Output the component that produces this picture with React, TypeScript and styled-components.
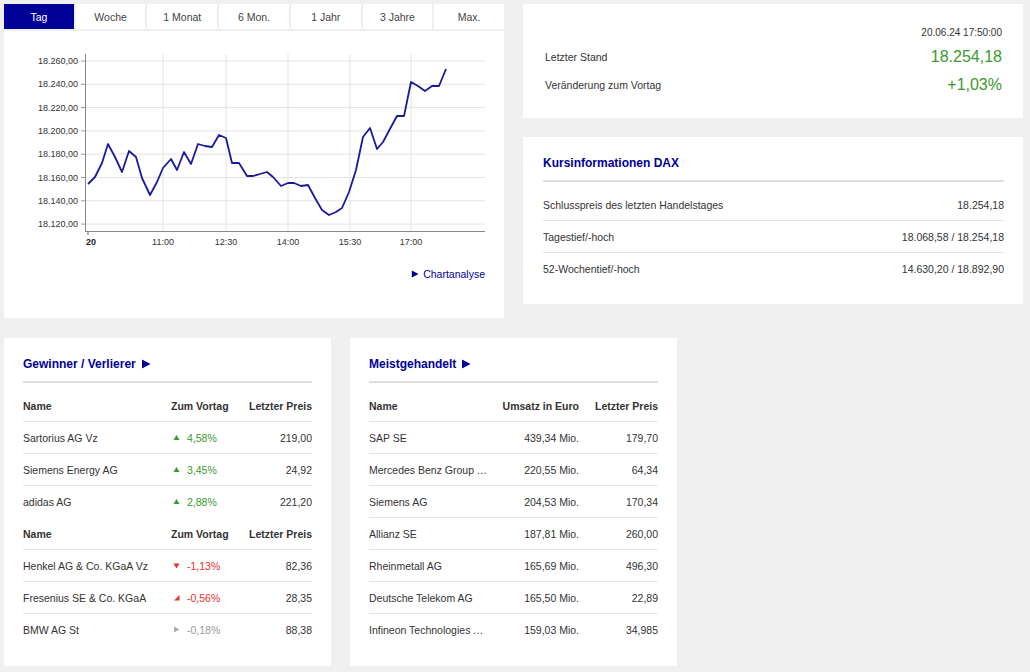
import React from "react";
import styled, { createGlobalStyle } from "styled-components";

const GlobalStyle = createGlobalStyle`
  * { box-sizing: border-box; }
  body {
    margin: 0;
    background: #f0f0f0;
    font-family: "Liberation Sans", Arial, sans-serif;
    color: #333;
  }
`;

const BLUE = "#000099";
const GREEN = "#3a9a2c";
const RED = "#e5312c";

const Page = styled.div`
  padding: 4px;
  width: 1030px;
`;

const TopRow = styled.div`
  display: flex;
  gap: 19px;
  align-items: flex-start;
`;

const LeftCol = styled.div`
  width: 500px;
  display: flex;
  flex-direction: column;
  gap: 2px;
`;

const RightCol = styled.div`
  width: 500px;
  display: flex;
  flex-direction: column;
  gap: 19px;
`;

const Tabs = styled.div`
  display: flex;
  gap: 2px;
  height: 25px;
`;

const Tab = styled.div<{ $active?: boolean }>`
  flex: 1;
  display: flex;
  align-items: center;
  justify-content: center;
  font-size: 10.5px;
  background: ${(p) => (p.$active ? BLUE : "#fff")};
  color: ${(p) => (p.$active ? "#fff" : "#444")};
`;

const ChartCard = styled.div`
  background: #fff;
  height: 287px;
`;

const ChartSvg = styled.svg`
  display: block;
`;

const LinkRow = styled.div`
  display: flex;
  justify-content: flex-end;
  padding: 11px 19px 0;
  line-height: 14px;
  font-size: 10.5px;
  color: ${BLUE};
  gap: 4px;
  align-items: center;
`;

const Card = styled.div<{ $pad?: string }>`
  background: #fff;
  padding: ${(p) => p.$pad || "18px 19px 20px"};
`;

const Title = styled.div`
  color: ${BLUE};
  font-weight: 700;
  font-size: 12px;
  line-height: 16px;
  display: flex;
  align-items: center;
  gap: 5px;
  padding-bottom: 9px;
  border-bottom: 2px solid #dedede;
  margin-bottom: 7px;
`;

const Stamp = styled.div`
  text-align: right;
  font-size: 10px;
  line-height: 16px;
  margin-bottom: 2px;
`;

const QuoteRow = styled.div`
  display: flex;
  justify-content: space-between;
  align-items: center;
  height: 28px;
  font-size: 10.5px;
  padding-left: 1px;
`;

const BigValue = styled.span`
  color: ${GREEN};
  font-size: 16px;
`;

const Row = styled.div<{ $cols: string; $head?: boolean; $line?: boolean }>`
  display: grid;
  grid-template-columns: ${(p) => p.$cols};
  align-items: center;
  height: 32px;
  font-size: 10.5px;
  font-weight: ${(p) => (p.$head ? 700 : 400)};
  border-bottom: ${(p) => (p.$line ? "1px solid #e4e4e4" : "1px solid transparent")};
`;

const Cell = styled.div<{ $right?: boolean; $color?: string }>`
  text-align: ${(p) => (p.$right ? "right" : "left")};
  color: ${(p) => p.$color || "inherit"};
  white-space: nowrap;
  overflow: hidden;
  text-overflow: ellipsis;
  display: flex;
  align-items: center;
  justify-content: ${(p) => (p.$right ? "flex-end" : "flex-start")};
  gap: 7px;
`;

const Ellip = styled.span`
  overflow: hidden;
  text-overflow: ellipsis;
  white-space: nowrap;
  max-width: 118px;
`;

const ArrowSlot = styled.span`
  width: 7px;
  margin-left: 2px;
  display: inline-flex;
`;

const BottomRow = styled.div`
  display: flex;
  gap: 19px;
  margin-top: 20px;
`;

const BottomCard = styled(Card)`
  width: 327px;
`;

const Play = ({ size = 9, color = BLUE }: { size?: number; color?: string }) => (
  <svg width={size} height={size} viewBox="0 0 10 10">
    <path d="M1 0.5 L9.5 5 L1 9.5 Z" fill={color} />
  </svg>
);

type Dir = "up" | "down" | "diag" | "flat";

const Arrow = ({ dir }: { dir: Dir }) => {
  const paths: Record<Dir, [string, string]> = {
    up: ["M0.5 6 L3.5 1 L6.5 6 Z", GREEN],
    down: ["M0.5 1.5 L6.5 1.5 L3.5 6.5 Z", RED],
    diag: ["M6.5 1 L6.5 6.5 L1 6.5 Z", RED],
    flat: ["M1 0.5 L6.5 3.5 L1 6.5 Z", "#aaa"],
  };
  const [d, c] = paths[dir];
  return (
    <svg width="7" height="7" viewBox="0 0 7 7">
      <path d={d} fill={c} />
    </svg>
  );
};

const tabs = ["Tag", "Woche", "1 Monat", "6 Mon.", "1 Jahr", "3 Jahre", "Max."];

const points: [number, number][] = [
  [88, 184], [95, 177], [102, 163], [108, 144], [115, 157], [122, 172], [129, 151],
  [136, 157], [142, 178], [150, 195], [157, 182], [163, 168], [171, 159], [177, 170],
  [184, 152], [191, 164], [198, 144], [205, 146], [212, 147], [219, 135], [226, 138],
  [232, 163], [239, 163], [247, 176], [253, 176], [260, 174], [267, 172], [273, 177],
  [281, 186], [288, 183], [294, 183], [301, 186], [308, 185], [315, 198], [322, 210],
  [329, 215], [336, 212], [342, 208], [349, 192], [356, 170], [363, 137], [370, 128],
  [377, 149], [383, 142], [391, 127], [397, 116], [404, 116], [411, 82], [418, 86],
  [425, 91], [432, 86], [439, 86], [446, 69],
];

const yLabels = ["18.260,00", "18.240,00", "18.220,00", "18.200,00", "18.180,00", "18.160,00", "18.140,00", "18.120,00"];
const xLabels: [number, string][] = [[163, "11:00"], [226, "12:30"], [288, "14:00"], [350, "15:30"], [411, "17:00"]];

const Chart = () => (
  <ChartSvg width="500" height="225" viewBox="4 31 500 225">
    {yLabels.map((l, i) => {
      const y = 61 + i * 23.3;
      return (
        <g key={l}>
          <line x1="85" x2="485" y1={y} y2={y} stroke="#e3e3e3" strokeWidth="1" />
          <line x1="81" x2="85" y1={y} y2={y} stroke="#999" strokeWidth="1" />
          <text x="78" y={y + 3} fontSize="9" textAnchor="end" fill="#333" fontFamily="Liberation Sans, Arial, sans-serif">
            {l}
          </text>
        </g>
      );
    })}
    {xLabels.map(([x, l]) => (
      <g key={l}>
        <line x1={x} x2={x} y1="54" y2="231" stroke="#e3e3e3" strokeWidth="1" />
        <text x={x} y="245" fontSize="9" textAnchor="middle" fill="#333" fontFamily="Liberation Sans, Arial, sans-serif">
          {l}
        </text>
      </g>
    ))}
    <line x1="85.5" x2="85.5" y1="54" y2="232" stroke="#888" strokeWidth="1" />
    <line x1="85" x2="485" y1="231.5" y2="231.5" stroke="#888" strokeWidth="1" />
    <line x1="88" x2="88" y1="231" y2="235" stroke="#666" strokeWidth="1" />
    <text x="86" y="245" fontSize="9" fontWeight="700" fill="#222" fontFamily="Liberation Sans, Arial, sans-serif">
      20
    </text>
    <polyline
      points={points.map((p) => p.join(",")).join(" ")}
      fill="none"
      stroke="#1a1a9a"
      strokeWidth="1.8"
      strokeLinejoin="round"
    />
  </ChartSvg>
);

const kurs = [
  ["Schlusspreis des letzten Handelstages", "18.254,18"],
  ["Tagestief/-hoch", "18.068,58 / 18.254,18"],
  ["52-Wochentief/-hoch", "14.630,20 / 18.892,90"],
];

type Mover = { name: string; dir: Dir; pct: string; price: string };

const winners: Mover[] = [
  { name: "Sartorius AG Vz", dir: "up", pct: "4,58%", price: "219,00" },
  { name: "Siemens Energy AG", dir: "up", pct: "3,45%", price: "24,92" },
  { name: "adidas AG", dir: "up", pct: "2,88%", price: "221,20" },
];

const losers: Mover[] = [
  { name: "Henkel AG & Co. KGaA Vz", dir: "down", pct: "-1,13%", price: "82,36" },
  { name: "Fresenius SE & Co. KGaA", dir: "diag", pct: "-0,56%", price: "28,35" },
  { name: "BMW AG St", dir: "flat", pct: "-0,18%", price: "88,38" },
];

const traded = [
  ["SAP SE", "439,34 Mio.", "179,70"],
  ["Mercedes Benz Group AG", "220,55 Mio.", "64,34"],
  ["Siemens AG", "204,53 Mio.", "170,34"],
  ["Allianz SE", "187,81 Mio.", "260,00"],
  ["Rheinmetall AG", "165,69 Mio.", "496,30"],
  ["Deutsche Telekom AG", "165,50 Mio.", "22,89"],
  ["Infineon Technologies AG", "159,03 Mio.", "34,985"],
];

const pctColor = (d: Dir) => (d === "up" ? GREEN : d === "flat" ? "#999" : RED);

const MOVER_COLS = "148px 78px 1fr";
const TRADED_COLS = "125px 1fr 79px";

const MoverGroup = ({ items }: { items: Mover[] }) => (
  <>
    <Row $cols={MOVER_COLS} $head $line>
      <Cell>Name</Cell>
      <Cell>Zum Vortag</Cell>
      <Cell $right>Letzter Preis</Cell>
    </Row>
    {items.map((m, i) => (
      <Row key={m.name} $cols={MOVER_COLS} $line={i < items.length - 1}>
        <Cell>{m.name}</Cell>
        <Cell $color={pctColor(m.dir)}>
          <ArrowSlot>
            <Arrow dir={m.dir} />
          </ArrowSlot>
          {m.pct}
        </Cell>
        <Cell $right>{m.price}</Cell>
      </Row>
    ))}
  </>
);

export default function App() {
  return (
    <Page>
      <GlobalStyle />
      <TopRow>
        <LeftCol>
          <Tabs>
            {tabs.map((t, i) => (
              <Tab key={t} $active={i === 0}>
                {t}
              </Tab>
            ))}
          </Tabs>
          <ChartCard>
            <Chart />
            <LinkRow>
              <Play size={8} />
              Chartanalyse
            </LinkRow>
          </ChartCard>
        </LeftCol>
        <RightCol>
          <Card $pad="21px 21px 19px 21px">
            <Stamp>20.06.24 17:50:00</Stamp>
            <QuoteRow>
              <span>Letzter Stand</span>
              <BigValue>18.254,18</BigValue>
            </QuoteRow>
            <QuoteRow>
              <span>Veränderung zum Vortag</span>
              <BigValue>+1,03%</BigValue>
            </QuoteRow>
          </Card>
          <Card $pad="18px 19px 19px 20px">
            <Title>Kursinformationen DAX</Title>
            {kurs.map(([l, v], i) => (
              <Row key={l} $cols="1fr auto" $line={i < kurs.length - 1}>
                <Cell>{l}</Cell>
                <Cell $right>{v}</Cell>
              </Row>
            ))}
          </Card>
        </RightCol>
      </TopRow>
      <BottomRow>
        <BottomCard>
          <Title>
            Gewinner / Verlierer <Play size={10} />
          </Title>
          <MoverGroup items={winners} />
          <MoverGroup items={losers} />
        </BottomCard>
        <BottomCard>
          <Title>
            Meistgehandelt <Play size={10} />
          </Title>
          <Row $cols={TRADED_COLS} $head $line>
            <Cell>Name</Cell>
            <Cell $right>Umsatz in Euro</Cell>
            <Cell $right>Letzter Preis</Cell>
          </Row>
          {traded.map(([n, u, p], i) => (
            <Row key={n} $cols={TRADED_COLS} $line={i < traded.length - 1}>
              <Cell>
                <Ellip>{n}</Ellip>
              </Cell>
              <Cell $right>{u}</Cell>
              <Cell $right>{p}</Cell>
            </Row>
          ))}
        </BottomCard>
      </BottomRow>
    </Page>
  );
}
